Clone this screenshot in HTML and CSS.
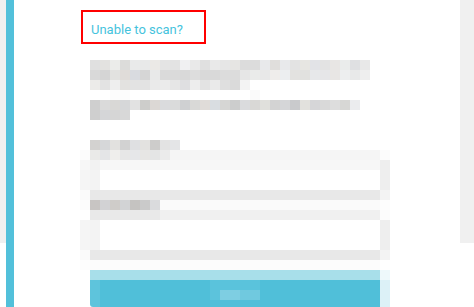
FILE: index.html
```html
<!DOCTYPE html>
<html lang="en">
<head>
<meta charset="utf-8">
<title>Scan</title>
<link rel="stylesheet" href="styles.css">
</head>
<body>
<div class="page">
  <div class="gutter-left"></div>
  <div class="rail"></div>
  <main class="content">
    <div class="column">
      <a class="scan-link">Unable to scan?</a>
      <div class="mosaic" id="mosaic"></div>
    </div>
  </main>
  <div class="gutter-right"></div>
</div>
<script src="script.js"></script>
</body>
</html>
```

FILE: styles.css
```css
html, body {
  margin: 0;
  padding: 0;
  background: #ffffff;
}
.page {
  display: flex;
  width: 474px;
  height: 307px;
  overflow: hidden;
  background: #ffffff;
}
.gutter-left {
  flex: none;
  width: 6px;
  height: 243px;
  background: #f0f0f0;
}
.rail {
  flex: none;
  width: 8px;
  background: #52c0da;
}
.content {
  flex: 1;
  padding-left: 66px;
}
.gutter-right {
  flex: none;
  width: 14px;
  height: 243px;
  background: #f0f0f0;
}
.column {
  width: 310px;
  padding-top: 10px;
}
.scan-link {
  display: block;
  box-sizing: border-box;
  width: 125px;
  height: 34px;
  margin-left: 1px;
  padding: 10px 0 0 8px;
  border: 2px solid #ff0000;
  font-family: Roboto, "Liberation Sans", sans-serif;
  font-size: 13px;
  line-height: 15px;
  color: #45c3dd;
  text-decoration: none;
}
.mosaic {
  margin-top: 16px;
  display: flex;
  flex-direction: column;
}
.mrow {
  display: flex;
  height: 10px;
}
.mrow.short {
  height: 7px;
}
.cell {
  flex: none;
  height: 100%;
}
.cell.corner {
  border-bottom-left-radius: 3px;
}
```

FILE: script.js
```js
(function () {
  var W = '#ffffff';
  var A = ['#e0e0e0','#e3e2e0','#ebecea','#dcdcda','#e9eaea','#e8e9e9','#ebe9e6','#e4e4e4','#e3e3e3','#f0f0f2','#e9e9e9','#e0e0e0','#e9e9e9','#e6e6e6',
           '#e6e5e3','#dcdcdc','#dcdcdc','#e8e9eb','#e0dedc','#e8e9eb','#e3e3e3','#e7e6e2','#e2e3e7','#e3e3e3','#e8e6e4','#eaeceb','#dfe0e2','#e8e8e8'];
  var B = ['#d9d9d9','#d5d5d5','#e2e2e0','#e0dcd9','#d9dbe0','#d6d6d6','#e8e9e9','#dadada','#dadada','#d9d9d9','#dddddd','#d9d9d9','#d9d9d9','#dcdcdc',
           '#dcdcdc','#e6e6e6','#eaebea','#e8e8e8','#efedeb','#eceef0','#e3e2e0','#e1e1df','#e7e8ea','#e6e6e8','#e8e6e4','#edeeef','#e8e9e9','#eeeeee'];
  var C = ['#ecebe9','#e3e3e3','#eeeeee','#e3e2e0','#e3e3e3','#e3e3e3','#eaeaea','#ebebeb','#e6e6e6','#dfdfe1','#ededed','#e3e3e3','#eaeaea','#dfdfdf','#dadada','#f3f3f3'];
  var E = ['#cfcfcf','#dadada','#d9d8d6','#d6d7d9','#e2e2e2','#cdcdcb','#dcd8d5','#dadbdd','#dadbdb','#cfd0d2','#d9d9d7','#e0dcd9','#d9dde1','#d6d6d4',
           '#cccdcd','#dadbdd','#d9d8d6','#e0e0dc','#d3d3d3','#d5d6d8','#c9cacc','#e2e1dd','#d6d6d8','#d9d9d9','#dddddd','#d7d7d5','#ebecee'];
  var F = ['#cfcfcf','#d5d6d8','#d6d6d6','#d8d8d8'];
  var G = ['#d3d2d0','#d6d7d9','#e2e1df','#d2d2d2','#dfe0e2','#e3e2e0','#cdcccb','#e3e3e3','#e4e5e7'];
  var H = ['#eaeae8','#e4e5e7','#efeeec','#e7e7e7','#e6e7e9','#e7e6e4','#e4e5e5','#ebebeb'];
  var I = ['#c8c5c3','#d2d2d4','#cfccc9','#d2d3d5','#c5c3c1','#cacaca','#dadbdd'];

  function c(list) { return list.map(function (x) { return [10, x]; }); }
  var field = [[10,'#f5f5f5'],[10,'#f3f3f3'],[280,W],[10,'#eeeeee']];
  var fieldBottom = [[10,'#fafafa'],[290,'#e8e8e8'],[10,'#f3f3f3']];
  var blue = '#50bfd9';

  var rows = [
    [[10,W]].concat(c(A)),
    [[10,W]].concat(c(B)),
    [[10,W]].concat(c(C)),
    [[30,W],[20,'#fcfcfc'],[120,W],[10,'#fafafa']],
    [[10,W]].concat(c(E)),
    [[10,W]].concat(c(F)),
    [],
    [],
    [[10,W]].concat(c(G)),
    [[10,'#fcfcfc']].concat(c(H), [[210,'#f5f5f5'],[10,'#fcfcfc']]),
    [[10,'#f7f7f7'],[10,'#f2f2f2'],[280,'#f7f7f7'],[10,'#eeeeee']],
    field,
    field,
    fieldBottom,
    [[10,'#fcfcfc']].concat(c(I), [[220,'#fafafa'],[10,'#fdfdfd']]),
    [[10,W],[70,'#e9e9e9'],[220,'#f0f0f0'],[10,'#fcfcfc']],
    field,
    field,
    field,
    fieldBottom,
    [[10,'#fdfdfd'],[290,'#fcfcfc'],[10,W]],
    [[10,W],[290,'#a8dfea'],[10,'#eef9fb']],
    [[10,W],[10,'#5ec4dc'],[110,blue],[50,'#5ac3dc'],[120,blue],[10,'#dcf1f7']],
    [[10,W],[10,'#5ec4dc'],[110,blue],[10,'#5cc3dc'],[20,'#7ecee2'],[20,'#70c9df'],[120,blue],[10,'#dcf1f7']],
    [[10,W],[10,'#5ec4dc','corner'],[280,blue],[10,'#dcf1f7']]
  ];

  var root = document.getElementById('mosaic');
  rows.forEach(function (segs, i) {
    var r = document.createElement('div');
    r.className = 'mrow' + (i === rows.length - 1 ? ' short' : '');
    segs.forEach(function (s) {
      var d = document.createElement('span');
      d.className = 'cell' + (s[2] ? ' ' + s[2] : '');
      d.style.width = s[0] + 'px';
      d.style.background = s[1];
      r.appendChild(d);
    });
    root.appendChild(r);
  });
})();
```
